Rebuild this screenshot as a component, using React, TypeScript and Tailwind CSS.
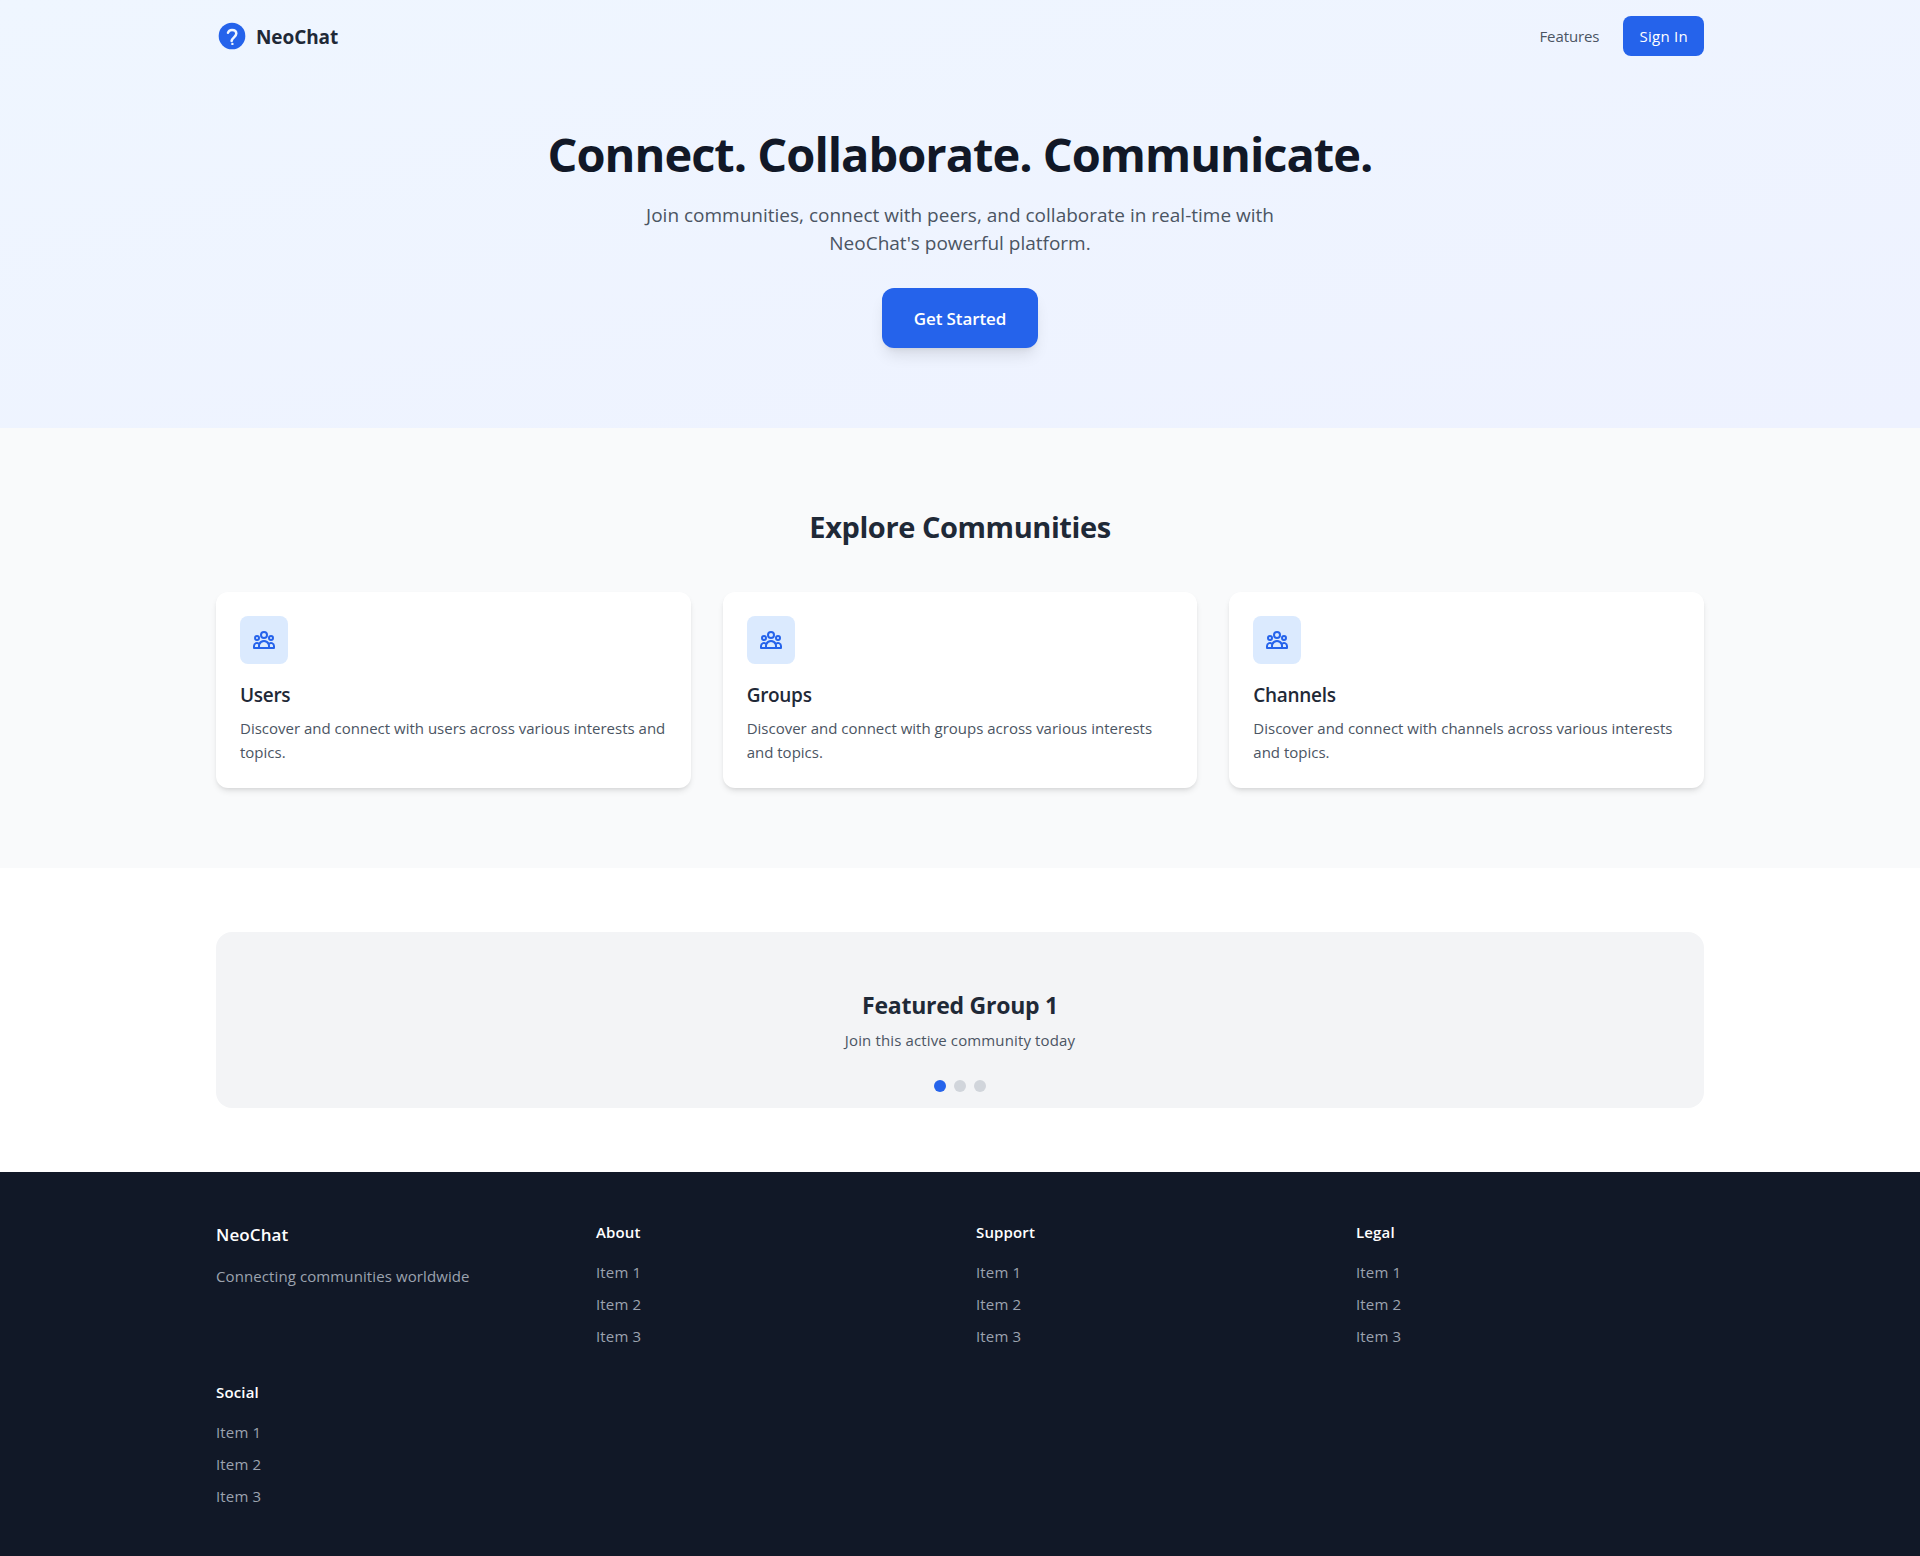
import type { ReactNode } from "react";
import { HiOutlineUserGroup } from "react-icons/hi";

function Logo() {
  return (
    <svg viewBox="0 0 32 32" className="h-8 w-8" fill="none" aria-hidden="true">
      <circle cx="16" cy="16" r="13.33" fill="#2563eb" />
      <path
        d="M12 12.800C12.500 10.900 14 9.900 16 9.900c2.600 0 4.300 1.500 4.300 3.700 0 3.400-4.300 4-4.700 7.400"
        stroke="#eff6ff"
        strokeWidth="2.500"
        strokeLinecap="round"
      />
      <circle cx="16.400" cy="23.900" r="1.200" fill="#eff6ff" />
    </svg>
  );
}

function Container({ children, className = "" }: { children: ReactNode; className?: string }) {
  return <div className={"mx-auto w-full max-w-[1536px] px-6 " + className}>{children}</div>;
}

const communities = [
  { title: "Users", word: "users" },
  { title: "Groups", word: "groups" },
  { title: "Channels", word: "channels" },
];

function FooterColumn({ title }: { title: string }) {
  return (
    <div>
      <h4 className="mb-4 font-semibold tracking-[0.15px]">{title}</h4>
      <ul className="space-y-2 tracking-[0.15px] text-[#9ca3af]">
        {["Item 1", "Item 2", "Item 3"].map((item) => (
          <li key={item}>{item}</li>
        ))}
      </ul>
    </div>
  );
}

export default function App() {
  return (
    <div className="min-h-screen bg-white font-['Open_Sans',sans-serif] text-[15px] leading-6">
      <div className="bg-gradient-to-br from-[#eff6ff] to-[#eef2ff]">
        <Container className="flex h-[72px] items-center justify-between">
          <div className="flex items-center gap-2">
            <Logo />
            <span className="pt-0.5 text-[19px] leading-7 font-bold tracking-[-0.1px] text-[#1f2937]">
              NeoChat
            </span>
          </div>
          <nav className="flex items-center gap-6">
            <a className="tracking-[-0.1px] text-[#4b5563]">Features</a>
            <button className="h-10 rounded-lg bg-[#2563eb] px-4 tracking-[0.28px] text-white">Sign In</button>
          </nav>
        </Container>
        <Container className="flex flex-col items-center pt-[58px] pb-20 text-center">
          <h1 className="mb-[23px] text-[47px] leading-[48px] font-bold tracking-[-1px] text-[#111827]">
            Connect. Collaborate. Communicate.
          </h1>
          <p className="mb-[31px] w-[672px] text-[19px] leading-7 text-[#4b5563]">
            Join communities, connect with peers, and collaborate in real-time with NeoChat's powerful
            platform.
          </p>
          <button className="h-[60px] w-[156px] rounded-xl bg-[#2563eb] pt-0.5 text-[17px] leading-7 font-semibold tracking-[-0.12px] text-white shadow-[0_10px_15px_-3px_rgba(0,0,0,0.1),0_4px_6px_-4px_rgba(0,0,0,0.1)]">
            Get Started
          </button>
        </Container>
      </div>

      <section className="bg-[#f9fafb] py-20">
        <Container>
          <h2 className="mb-[47px] pt-px text-center text-[29px] leading-9 font-bold tracking-[-0.42px] text-[#1f2937]">
            Explore Communities
          </h2>
          <div className="grid grid-cols-3 gap-8">
            {communities.map((c) => (
              <article
                key={c.title}
                className="rounded-xl bg-white p-6 shadow-[0_4px_6px_-1px_rgba(0,0,0,0.1),0_2px_4px_-2px_rgba(0,0,0,0.1)]"
              >
                <div className="mb-[17px] flex h-12 w-12 items-center justify-center rounded-lg bg-[#dbeafe]">
                  <HiOutlineUserGroup className="h-6 w-6 text-[#2563eb]" />
                </div>
                <h3 className="mb-[7px] text-[19px] leading-7 font-semibold tracking-[-0.3px] text-[#1f2937]">
                  {c.title}
                </h3>
                <p className="text-[#4b5563]">
                  {`Discover and connect with ${c.word} across various interests and topics.`}
                </p>
              </article>
            ))}
          </div>
        </Container>
      </section>

      <section className="bg-white py-16">
        <Container>
          <div className="flex h-44 flex-col items-center rounded-2xl bg-[#f3f4f6] pt-[57px]">
            <h3 className="mb-[7px] text-[23px] leading-8 font-bold tracking-[-0.25px] text-[#1f2937]">
              Featured Group 1
            </h3>
            <p className="tracking-[0.13px] text-[#4b5563]">Join this active community today</p>
            <div className="mt-7 flex gap-2">
              <span className="h-3 w-3 rounded-full bg-[#2563eb]" />
              <span className="h-3 w-3 rounded-full bg-[#d1d5db]" />
              <span className="h-3 w-3 rounded-full bg-[#d1d5db]" />
            </div>
          </div>
        </Container>
      </section>

      <footer className="bg-[#111827] py-12 text-white">
        <Container className="grid grid-cols-4 gap-8">
          <div>
            <h3 className="mb-[15px] pt-px text-[17px] leading-7 font-semibold tracking-[0.1px]">NeoChat</h3>
            <p className="tracking-[0.1px] text-[#9ca3af]">Connecting communities worldwide</p>
          </div>
          <FooterColumn title="About" />
          <FooterColumn title="Support" />
          <FooterColumn title="Legal" />
          <FooterColumn title="Social" />
        </Container>
      </footer>
    </div>
  );
}
